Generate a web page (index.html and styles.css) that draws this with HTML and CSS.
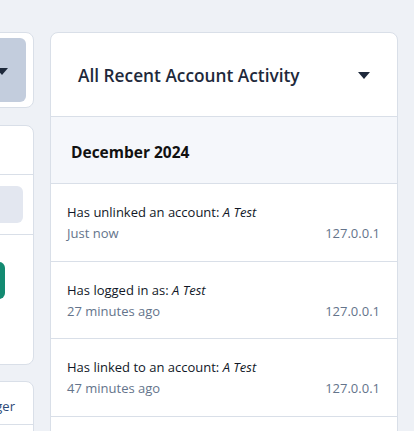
FILE: index.html
```html
<!DOCTYPE html>
<html lang="en">
<head>
<meta charset="utf-8">
<title>Account Activity</title>
<link rel="stylesheet" href="styles.css">
</head>
<body>
<div class="layout">
  <aside class="side">
    <div class="card switcher">
      <button class="switcher-btn" type="button" aria-label="Switch account">
        <svg class="caret" width="12" height="7" viewBox="0 0 12 7"><path d="M0 0h12L6 7z" fill="#1e293b"/></svg>
      </button>
    </div>
    <div class="card panel">
      <div class="panel-head"></div>
      <div class="panel-search"><div class="search-box"></div></div>
      <div class="panel-actions"><button class="btn-green" type="button" aria-label="Link account"></button></div>
    </div>
    <div class="card links">
      <div class="link-row"><span class="link">Manager</span></div>
      <div class="link-row"></div>
    </div>
  </aside>

  <main class="card activity">
    <div class="activity-head">
      <h1 class="activity-title">All Recent Account Activity</h1>
      <svg class="caret" width="12" height="7" viewBox="0 0 12 7"><path d="M0 0h12L6 7z" fill="#1e293b"/></svg>
    </div>
    <div class="month">December 2024</div>
    <ul class="events">
      <li class="event">
        <div class="event-text">Has unlinked an account: <em>A Test</em></div>
        <div class="event-meta"><span>Just now</span><span>127.0.0.1</span></div>
      </li>
      <li class="event">
        <div class="event-text">Has logged in as: <em>A Test</em></div>
        <div class="event-meta"><span>27 minutes ago</span><span>127.0.0.1</span></div>
      </li>
      <li class="event">
        <div class="event-text">Has linked to an account: <em>A Test</em></div>
        <div class="event-meta"><span>47 minutes ago</span><span>127.0.0.1</span></div>
      </li>
      <li class="event event-empty"></li>
    </ul>
  </main>
</div>
</body>
</html>
```
FILE: styles.css
```css
* { box-sizing: border-box; }

html, body {
  margin: 0;
  padding: 0;
  background: #eef1f6;
  font-family: "Open Sans", "Noto Sans", sans-serif;
  color: #111827;
  overflow: hidden;
}

.layout {
  display: flex;
  align-items: flex-start;
  gap: 16px;
  padding: 32px 16px 0 0;
  margin-left: -206px;
}

.side {
  flex: 0 0 240px;
  display: flex;
  flex-direction: column;
  gap: 16px;
}

.card {
  background: #fff;
  border: 1px solid #d9dfe8;
  border-radius: 8px;
}

/* switcher */
.switcher {
  padding: 5px 7px 5px 5px;
}
.switcher-btn {
  width: 100%;
  height: 64px;
  border: 0;
  border-radius: 6px;
  background: #c3cddd;
  display: flex;
  align-items: center;
  justify-content: flex-end;
  padding: 0 18px 0 16px;
}
.switcher-btn .caret { margin-top: 2px; }

/* panel */
.panel {
  margin-top: 1px;
  height: 240px;
  display: flex;
  flex-direction: column;
}
.panel-head {
  height: 49px;
  border-bottom: 1px solid #d9dfe8;
}
.panel-search {
  padding: 11px 10px 11px 16px;
  border-bottom: 1px solid #d9dfe8;
}
.search-box {
  height: 37px;
  border-radius: 6px;
  background: #e3e7f0;
}
.panel-actions {
  padding: 27px 28px 0 16px;
}
.btn-green {
  display: block;
  width: 100%;
  height: 37px;
  border: 0;
  border-radius: 6px;
  background: #138a71;
}

/* links */
.link-row {
  height: 43px;
  display: flex;
  align-items: center;
  justify-content: flex-end;
  padding: 6px 18px 0;
  border-bottom: 1px solid #d9dfe8;
  font-size: 13px;
}
.link-row:last-child { border-bottom: 0; }
.link { color: #2c4a78; }

/* activity */
.activity {
  flex: 1 1 auto;
  min-width: 0;
  overflow: hidden;
}
.activity-head {
  height: 84px;
  display: flex;
  align-items: center;
  justify-content: space-between;
  padding: 1px 27px 0 27px;
  border-bottom: 1px solid #d9dfe8;
}
.activity-title {
  margin: 0;
  font-size: 17.3px;
  font-weight: 600;
  color: #1e293b;
}

.month {
  height: 67px;
  display: flex;
  align-items: center;
  padding: 3px 20px 0;
  background: #f5f7fb;
  border-bottom: 1px solid #d9dfe8;
  font-size: 15.5px;
  font-weight: 700;
  color: #111;
}

.events {
  list-style: none;
  margin: 0;
  padding: 0;
}
.event {
  padding: 18px 17px 16.5px 16px;
  border-bottom: 1px solid #d9dfe8;
  font-size: 13px;
  line-height: 21px;
}
.event-empty {
  height: 60px;
  border-bottom: 0;
}
.event-text { color: #111827; }
.event-meta {
  display: flex;
  justify-content: space-between;
  color: #64748b;
}
```
